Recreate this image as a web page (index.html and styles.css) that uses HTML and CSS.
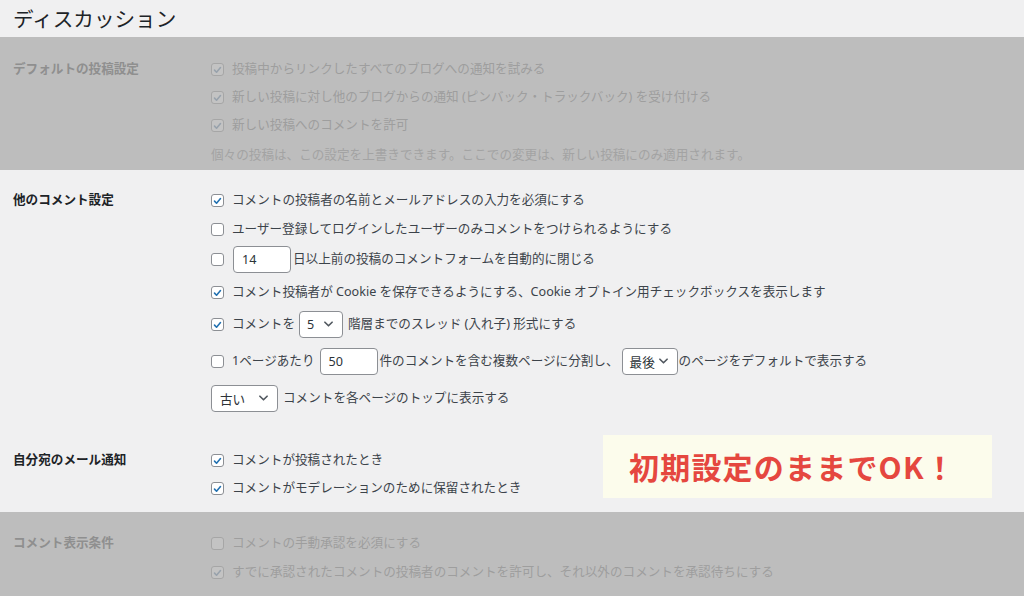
FILE: index.html
```html
<!DOCTYPE html>
<html lang="ja">
<head>
<meta charset="utf-8">
<title>ディスカッション設定</title>
<link rel="stylesheet" href="styles.css">
</head>
<body>
<div class="page">
  <h1 class="title">ディスカッション</h1>

  <section class="group dim g1">
    <div class="label">デフォルトの投稿設定</div>
    <div class="fields">
      <div class="row"><span class="cb on"><svg viewBox="0 0 14 14"><path d="M3.2 7.2 L5.8 9.8 L10.8 3.8"/></svg></span><span class="txt">投稿中からリンクしたすべてのブログへの通知を試みる</span></div>
      <div class="row"><span class="cb on"><svg viewBox="0 0 14 14"><path d="M3.2 7.2 L5.8 9.8 L10.8 3.8"/></svg></span><span class="txt">新しい投稿に対し他のブログからの通知 (ピンバック・トラックバック) を受け付ける</span></div>
      <div class="row"><span class="cb on"><svg viewBox="0 0 14 14"><path d="M3.2 7.2 L5.8 9.8 L10.8 3.8"/></svg></span><span class="txt">新しい投稿へのコメントを許可</span></div>
      <div class="row desc">個々の投稿は、この設定を上書きできます。ここでの変更は、新しい投稿にのみ適用されます。</div>
    </div>
  </section>

  <section class="group g2">
    <div class="label">他のコメント設定</div>
    <div class="fields">
      <div class="row"><span class="cb on"><svg viewBox="0 0 14 14"><path d="M3.2 7.2 L5.8 9.8 L10.8 3.8"/></svg></span><span class="txt">コメントの投稿者の名前とメールアドレスの入力を必須にする</span></div>
      <div class="row mt1"><span class="cb"></span><span class="txt">ユーザー登録してログインしたユーザーのみコメントをつけられるようにする</span></div>
      <div class="row mt2"><span class="cb"></span><span class="input w58 ml1">14</span><span class="txt ml2">日以上前の投稿のコメントフォームを自動的に閉じる</span></div>
      <div class="row mt5"><span class="cb on"><svg viewBox="0 0 14 14"><path d="M3.2 7.2 L5.8 9.8 L10.8 3.8"/></svg></span><span class="txt">コメント投稿者が Cookie を保存できるようにする、Cookie オプトイン用チェックボックスを表示します</span></div>
      <div class="row mt4"><span class="cb on"><svg viewBox="0 0 14 14"><path d="M3.2 7.2 L5.8 9.8 L10.8 3.8"/></svg></span><span class="txt">コメントを</span><span class="select w44 ml4"><span>5</span><svg class="chev" viewBox="0 0 10 6"><path d="M1 1 L5 5 L9 1"/></svg></span><span class="txt ml5">階層までのスレッド (入れ子) 形式にする</span></div>
      <div class="row mt9"><span class="cb"></span><span class="txt">1ページあたり</span><span class="input w58 ml5">50</span><span class="txt ml2">件のコメントを含む複数ページに分割し、</span><span class="select w56 ml3"><span>最後</span><svg class="chev" viewBox="0 0 10 6"><path d="M1 1 L5 5 L9 1"/></svg></span><span class="txt ml1">のページをデフォルトで表示する</span></div>
      <div class="row mt9"><span class="select w67 first"><span>古い</span><svg class="chev" viewBox="0 0 10 6"><path d="M1 1 L5 5 L9 1"/></svg></span><span class="txt ml5">コメントを各ページのトップに表示する</span></div>
    </div>
  </section>

  <section class="group g3">
    <div class="label">自分宛のメール通知</div>
    <div class="fields">
      <div class="row"><span class="cb on"><svg viewBox="0 0 14 14"><path d="M3.2 7.2 L5.8 9.8 L10.8 3.8"/></svg></span><span class="txt">コメントが投稿されたとき</span></div>
      <div class="row"><span class="cb on"><svg viewBox="0 0 14 14"><path d="M3.2 7.2 L5.8 9.8 L10.8 3.8"/></svg></span><span class="txt">コメントがモデレーションのために保留されたとき</span></div>
    </div>
    <div class="callout">初期設定のままでOK！</div>
  </section>

  <section class="group dim g4">
    <div class="label">コメント表示条件</div>
    <div class="fields">
      <div class="row"><span class="cb"></span><span class="txt">コメントの手動承認を必須にする</span></div>
      <div class="row mt1"><span class="cb on"><svg viewBox="0 0 14 14"><path d="M3.2 7.2 L5.8 9.8 L10.8 3.8"/></svg></span><span class="txt">すでに承認されたコメントの投稿者のコメントを許可し、それ以外のコメントを承認待ちにする</span></div>
    </div>
  </section>
</div>
</body>
</html>
```

FILE: styles.css
```css
* { box-sizing: border-box; }
html, body { margin: 0; padding: 0; }
body {
  background: #f0f0f1;
  font-family: "Noto Sans", "Noto Sans CJK JP", sans-serif;
  font-size: 12.6px;
  color: #3c434a;
  width: 1024px;
  height: 596px;
  overflow: hidden;
}
.page { width: 1024px; }
.title {
  margin: 0;
  height: 37px;
  padding: 2px 0 0 13px;
  font-size: 20.6px;
  font-weight: 400;
  line-height: 35px;
  color: #1d2327;
}
.group {
  display: flex;
  position: relative;
}
.label {
  width: 211px;
  flex: none;
  padding-left: 13px;
  font-weight: 700;
  color: #1d2327;
  height: 28px;
  line-height: 28px;
}
.fields { display: flex; flex-direction: column; }
.row {
  display: flex;
  align-items: center;
  height: 28px;
  white-space: nowrap;
}
.mt1 { margin-top: 1px; }
.mt2 { margin-top: 2px; }
.mt4 { margin-top: 4px; }
.mt5 { margin-top: 5px; }
.mt9 { margin-top: 9px; }
.ml1 { margin-left: 1px; }
.ml2 { margin-left: 2px; }
.ml3 { margin-left: 3px; }
.ml4 { margin-left: 4px; }
.ml5 { margin-left: 5px; }

.g1 { padding: 18px 0 3px; height: 133px; }
.g2 { padding: 16px 0 17px; }
.g3 { padding: 17px 0 10px; }
.g4 { padding: 17px 0 0; height: 84px; }

.cb {
  flex: none;
  width: 13px;
  height: 13px;
  border: 1px solid #8c8f94;
  border-radius: 3px;
  background: #fff;
  display: inline-flex;
  align-items: center;
  justify-content: center;
  margin-right: 8px;
  margin-top: 1px;
}
.cb svg { width: 12px; height: 12px; display: block; }
.cb svg path { fill: none; stroke: #2271b1; stroke-width: 2; stroke-linecap: round; stroke-linejoin: round; }
.txt { line-height: 28px; }

.input, .select {
  flex: none;
  height: 27px;
  border: 1px solid #8c8f94;
  border-radius: 4px;
  background: #fff;
  display: inline-flex;
  align-items: center;
  padding-left: 8px;
  color: #2c3338;
}
.select { justify-content: space-between; padding-right: 9px; padding-left: 7px; }
.select.first { padding-left: 8px; }
.chev { width: 9px; height: 6px; display: block; }
.chev path { fill: none; stroke: #50575e; stroke-width: 1.8; stroke-linecap: round; stroke-linejoin: round; }
.w44 { width: 44px; }
.w56 { width: 56px; }
.w58 { width: 58px; }
.w67 { width: 67px; }

/* dimmed bands */
.dim { background: #bdbdbd; color: #9e9e9e; }
.dim .label { color: #8f8f8f; }
.dim .cb { background: #c3c3c3; border-color: #a6a6a6; }
.dim .cb svg path { stroke: #98a2ac; }
.desc { color: #a3a3a3; }

.callout {
  position: absolute;
  left: 603px;
  top: 6px;
  width: 389px;
  height: 63px;
  background: #fcfcec;
  color: #e5473f;
  font-family: "Noto Sans CJK JP", sans-serif;
  font-weight: 700;
  font-size: 30px;
  letter-spacing: 1.2px;
  line-height: 63px;
  padding-left: 26px;
}
```
